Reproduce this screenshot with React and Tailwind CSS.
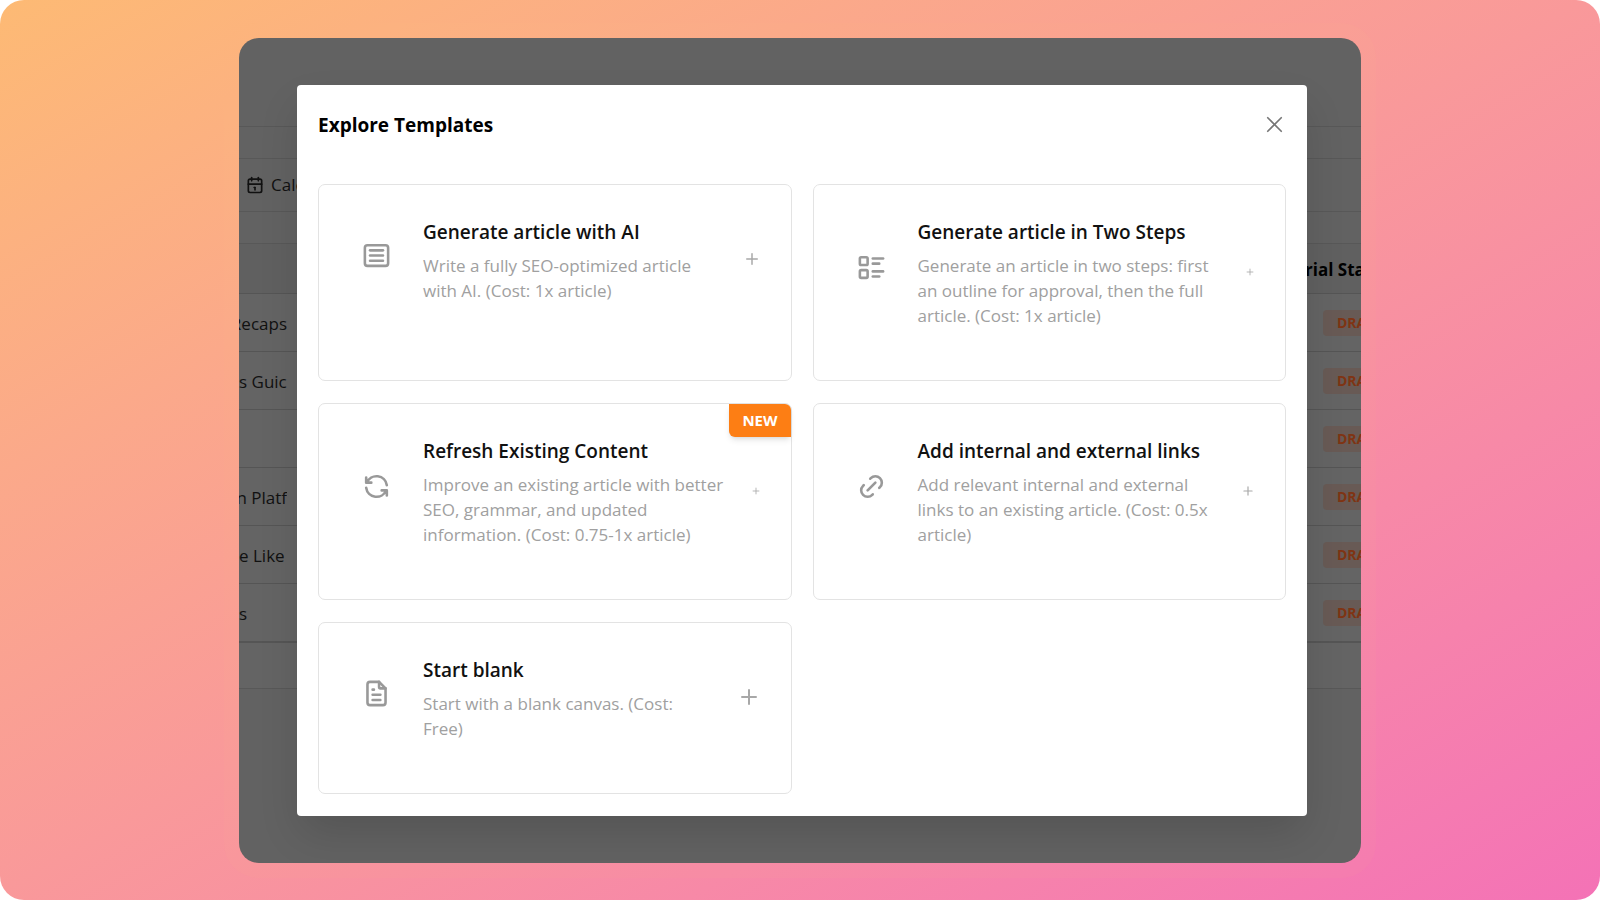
import React from 'react';
import { Plus, X } from 'lucide-react';
import {
  TbArticle,
  TbCalendar,
  TbFileText,
  TbLink,
  TbListDetails,
  TbRefresh,
} from 'react-icons/tb';

const templates = [
  {
    title: 'Generate article with AI',
    description: 'Write a fully SEO-optimized article with AI. (Cost: 1x article)',
    icon: TbArticle,
    plusSize: 18,
  },
  {
    title: 'Generate article in Two Steps',
    description:
      'Generate an article in two steps: first an outline for approval, then the full article. (Cost: 1x article)',
    icon: TbListDetails,
    plusSize: 10,
  },
  {
    title: 'Refresh Existing Content',
    description:
      'Improve an existing article with better SEO, grammar, and updated information. (Cost: 0.75-1x article)',
    icon: TbRefresh,
    plusSize: 10,
    isNew: true,
  },
  {
    title: 'Add internal and external links',
    description:
      'Add relevant internal and external links to an existing article. (Cost: 0.5x article)',
    icon: TbLink,
    plusSize: 14,
  },
  {
    title: 'Start blank',
    description: 'Start with a blank canvas. (Cost: Free)',
    icon: TbFileText,
    plusSize: 24,
  },
];

const articles = [
  { name: 'Recaps', scrolled: true },
  { name: 's Guic' },
  { name: '' },
  { name: 'n Platf', scrolled: true },
  { name: 'e Like' },
  { name: 's' },
];

const TemplateCard = ({ template }) => {
  const Icon = template.icon;

  return (
    <button
      type="button"
      className="relative flex items-start rounded-[7px] border border-[#e3e3e3] bg-white pl-[42px] pr-[30px] pt-[31px] pb-[52px] text-left"
    >
      <div className="flex w-full items-center">
        <Icon className="mb-2 mr-[31px] h-[31px] w-[31px] shrink-0 text-[#999999]" />
        <div className="min-w-0 flex-1">
          <h3 className="text-[19px] leading-8 font-semibold text-[#111111]">{template.title}</h3>
          <p className="mt-[5px] text-[17px] leading-[25px] text-[#a0a0a0]">{template.description}</p>
        </div>
        <Plus
          size={template.plusSize}
          strokeWidth={2}
          className="ml-6 shrink-0 text-[#a8a8a8]"
        />
      </div>
      {template.isNew && (
        <span className="absolute top-0 right-0 rounded-tr-md rounded-bl-md bg-[#fd7e14] px-[13px] py-1.5 text-[15px] leading-[21px] font-bold text-white shadow-md">
          NEW
        </span>
      )}
    </button>
  );
};

const TemplatesModal = () => (
  <section
    role="dialog"
    aria-labelledby="templates-title"
    className="w-full rounded bg-white px-[21px] pb-[22px] shadow-[0_20px_40px_-4px_rgba(0,0,0,0.14)]"
  >
    <header className="flex h-[99px] items-start justify-between pt-6">
      <h2 id="templates-title" className="text-[19px] leading-8 font-bold text-black">
        Explore Templates
      </h2>
      <button type="button" aria-label="Close" className="-mr-0.5 flex h-8 items-center text-[#777777]">
        <X size={27} strokeWidth={1.5} />
      </button>
    </header>
    <div className="grid grid-cols-2 gap-x-[21px] gap-y-[22px]">
      {templates.map((template) => (
        <TemplateCard key={template.title} template={template} />
      ))}
    </div>
  </section>
);

// Article list that stays dimmed behind the modal
const ArticlesPage = () => (
  <div className="min-w-0 bg-[#626262] text-[17px] text-[#111111]">
    <div className="h-[89px] border-b border-[#585858]" />
    <div className="h-8 border-b border-[#585858]" />
    <nav className="flex h-[53px] items-center gap-1.5 border-b border-[#585858] pl-1.5">
      <TbCalendar className="h-5 w-5" />
      <span>Cale</span>
    </nav>
    <div className="h-8 border-b border-[#585858]" />
    <table className="w-full table-fixed border-collapse text-left">
      <thead>
        <tr className="h-[50px] border-b border-[#555555] bg-[#606060]">
          <th />
          <th className="w-14 overflow-hidden pt-0.5 font-bold whitespace-nowrap text-black">rial Sta</th>
        </tr>
      </thead>
      <tbody className="border-b-2 border-[#555555]">
        {articles.map((article, index) => (
          <tr key={index} className="h-[58px] border-b border-[#555555] bg-[#646464]">
            <td className="pt-0.5">
              <div
                className={`flex w-12 overflow-hidden whitespace-nowrap ${
                  article.scrolled ? 'justify-end' : 'justify-start'
                }`}
              >
                {article.name}
              </div>
            </td>
            <td className="w-14 overflow-hidden pl-[18px]">
              <span className="inline-block rounded bg-[#685a55] px-3.5 text-[14px] leading-[26px] font-bold text-[#7f3413]">
                DRA
              </span>
            </td>
          </tr>
        ))}
      </tbody>
    </table>
    <div className="h-[46px] border-b border-[#585858] bg-[#646464]" />
  </div>
);

const App = () => {
  return (
    <div className="min-h-screen bg-white font-['Open_Sans','Noto_Sans',sans-serif]">
      <main className="flex min-h-screen items-center justify-center rounded-3xl bg-linear-to-br from-[#fdba74] to-[#f472b6]">
        <div className="grid w-full max-w-[1122px] overflow-hidden rounded-[20px] ring-[15px] ring-[#ffc88c]/5">
          <div className="col-start-1 row-start-1 grid">
            <ArticlesPage />
          </div>
          <div className="z-10 col-start-1 row-start-1 pt-[47px] pr-[54px] pb-[47px] pl-[58px]">
            <TemplatesModal />
          </div>
        </div>
      </main>
    </div>
  );
};

export default App;
